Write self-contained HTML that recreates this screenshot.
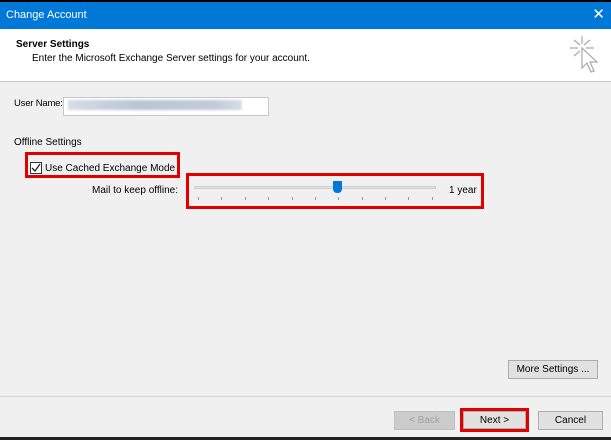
<!DOCTYPE html><html><head><style>
body{margin:0;width:611px;height:440px;overflow:hidden;background:#000;font-family:"Liberation Sans",sans-serif;font-size:10px;color:#000;position:relative}
div{position:absolute;box-sizing:border-box;white-space:nowrap}
.btn{background:#e1e1e1;border:1px solid #adadad;text-align:center;line-height:17px}
.red{border:3px solid #e00000}
.tick{width:1px;height:3px;background:#999;top:197px}
</style></head><body>
<div style="left:0;top:2px;width:611px;height:27px;background:#0078d7;color:#fff;font-size:11px;line-height:26px;padding-left:6px">Change Account<span style="position:absolute;right:6px;font-size:15px">✕</span></div>
<div style="left:0;top:29px;width:611px;height:53px;background:#fff;border-bottom:1px solid #c8c8c8"></div>
<div style="left:16px;top:39px;font-weight:bold">Server Settings</div>
<div style="left:32px;top:53px">Enter the Microsoft Exchange Server settings for your account.</div>
<svg style="position:absolute;left:568px;top:34px" width="38" height="44" viewBox="0 0 38 44"><g stroke="#aaa" stroke-width="1.2" fill="none"><path d="M14 2v8M6 6l6 5M2 14h8M22 6l-6 5M26 14h-8M6 22l6-5"/><path d="M14 14l0 20 5-5 4 9 3-1-4-9 7 0z" fill="#fff"/></g></svg>
<div style="left:0;top:82px;width:611px;height:355px;background:#f0f0f0"></div>
<div style="left:14px;top:98px;font-size:9.5px;letter-spacing:-0.2px">User Name:</div>
<div style="left:63px;top:97px;width:206px;height:19px;background:#fff;border:1px solid #c8c8c8"></div>
<div style="left:68px;top:100px;width:174px;height:10px;background:linear-gradient(90deg,#d6dde6,#b9c6d6 40%,#c2ccd9 85%,#d8dee6);filter:blur(1px)"></div>
<div style="left:14px;top:137px">Offline Settings</div>
<div class="red" style="left:25px;top:152px;width:155px;height:26px"></div>
<div style="left:30px;top:162px;width:12px;height:12px;border:1px solid #333;background:#fff"></div>
<svg style="position:absolute;left:31px;top:163px" width="10" height="10"><path d="M1 5l3 3 5-7" stroke="#222" stroke-width="1.3" fill="none"/></svg>
<div style="left:45px;top:163px">Use Cached Exchange Mode</div>
<div style="left:92px;top:185px">Mail to keep offline:</div>
<div class="red" style="left:186px;top:173px;width:298px;height:36px"></div>
<div style="left:194px;top:186px;width:242px;height:3px;background:#e0e0e0;border:1px solid #d0d0d0"></div>
<div style="left:333px;top:181px;width:9px;height:12px;background:#0078d7;border-radius:0 0 4px 4px"></div>
<div class="tick" style="left:198px"></div><div class="tick" style="left:221px"></div><div class="tick" style="left:245px"></div><div class="tick" style="left:268px"></div><div class="tick" style="left:292px"></div><div class="tick" style="left:315px"></div><div class="tick" style="left:338px"></div><div class="tick" style="left:362px"></div><div class="tick" style="left:385px"></div><div class="tick" style="left:408px"></div><div class="tick" style="left:432px"></div>
<div style="left:449px;top:185px">1 year</div>
<div class="btn" style="left:508px;top:360px;width:90px;height:19px">More Settings ...</div>
<div style="left:0;top:396px;width:611px;height:1px;background:#d5d5d5"></div>
<div class="btn" style="left:394px;top:411px;width:61px;height:19px;color:#a0a0a0;background:#ccc;border-color:#bfbfbf">&lt; Back</div>
<div class="btn" style="left:463px;top:411px;width:63px;height:18px">Next &gt;</div>
<div class="red" style="left:460px;top:408px;width:69px;height:24px"></div>
<div class="btn" style="left:538px;top:411px;width:65px;height:19px">Cancel</div>
<div style="left:0;top:437px;width:611px;height:3px;background:#222"></div>
</body></html>
